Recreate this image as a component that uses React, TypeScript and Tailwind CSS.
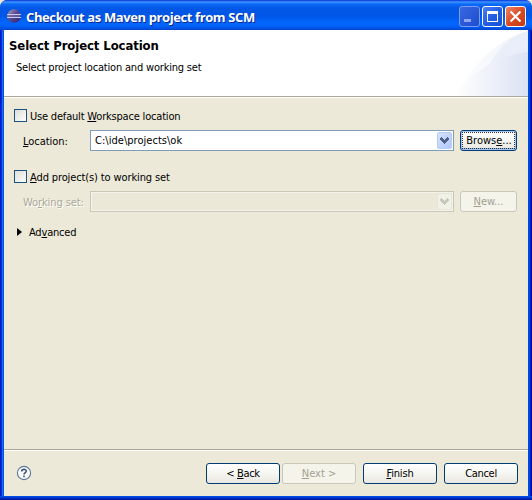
import type { ReactNode } from "react";

const BODY = "font-['DejaVu_Sans_Condensed','DejaVu_Sans',sans-serif] [font-stretch:condensed]";

function Key({ children }: { children: ReactNode }) {
  return <span className="underline decoration-1 underline-offset-[1px]">{children}</span>;
}

function Check() {
  return <span className="h-[13px] w-[13px] shrink-0 border border-[#1c5180] bg-linear-135 from-[#dcdcd7] to-white" />;
}

function Chevron({ disabled = false }: { disabled?: boolean }) {
  return (
    <span
      className={`m-px flex w-[15px] shrink-0 items-center justify-center rounded-[2px] border ${
        disabled ? "border-[#e6e5da] bg-[#f2f1e8]" : "border-[#b8cbf6] bg-linear-to-br from-[#d5e1ff] to-[#b1c8f7]"
      }`}
    >
      <svg width="9" height="7" viewBox="0 0 9 7" shapeRendering="crispEdges">
        <path
          d="M0 1h1V0h1v1h1v1h1v1h1V2h1V1h1V0h1v1h1v2H8v1H7v1H6v1H5v1H4V6H3V5H2V4H1V3H0Z"
          fill={disabled ? "#c9c7ba" : "#4d6185"}
        />
      </svg>
    </span>
  );
}

function Combo({ value = "", disabled = false }: { value?: string; disabled?: boolean }) {
  return (
    <div
      className={`flex h-[21px] w-[364px] shrink-0 border ${
        disabled ? "border-[#c9c7ba] bg-[#ebe8d8] shadow-[inset_0_0_0_1px_#f5f4ea]" : "border-[#7f9db9] bg-white"
      }`}
    >
      <span className="flex-1 pt-px pl-[4px] leading-[18px] tracking-[0.03px]">{value}</span>
      <Chevron disabled={disabled} />
    </div>
  );
}

function Button({ children, className, disabled = false }: { children: ReactNode; className: string; disabled?: boolean }) {
  return (
    <div
      className={`flex h-[21px] shrink-0 items-center justify-center rounded-[3px] border whitespace-nowrap ${
        disabled
          ? "border-[#c9c7ba] bg-[#f5f4ea] text-[#a1a192]"
          : "border-[#003c74] bg-linear-to-b from-white via-[#f5f5f1] to-[#e9e7e0]"
      } ${className}`}
    >
      {children}
    </div>
  );
}

function TitleBar() {
  return (
    <div className="flex h-[30px] items-start rounded-t-[7px] bg-[linear-gradient(to_bottom,#0831d9_0px,#3d95ff_2px,#0c6bf7_4px,#0458e6_8px,#0055e5_15px,#0264fb_22px,#0265ff_25px,#005bf0_27px,#0144cf_30px)] pt-[6px] pr-[6px] pl-[7px]">
      <svg width="14" height="14" viewBox="0 0 14 14" className="mt-[3px] shrink-0">
        <defs>
          <linearGradient id="orb" x1="0" y1="0" x2="1" y2="1">
            <stop offset="0" stopColor="#b4a2bd" />
            <stop offset=".45" stopColor="#5a4a90" />
            <stop offset="1" stopColor="#2c2070" />
          </linearGradient>
        </defs>
        <circle cx="7" cy="7" r="6.7" fill="url(#orb)" />
        <path d="M0 5.5h14M0 8.5h14" stroke="#c8cdf0" />
        <path d="M1 7h12" stroke="#7375b8" />
      </svg>
      <span className="mt-px ml-[5px] flex-1 font-['Open_Sans',sans-serif] text-[13px] leading-5 font-bold tracking-[-0.39px] [font-stretch:normal] whitespace-nowrap text-white [text-shadow:1px_1px_#0a2a90]">
        Checkout as Maven project from SCM
      </span>
      <div className="flex gap-[2px]">
        <span className="h-[21px] w-[21px] rounded-[3px] border border-[#7b9df0] bg-linear-135 from-[#3a67e0] to-[#1c4bd0] pt-[12px] pl-1">
          <span className="block h-[3px] w-[7px] bg-[#8da6ee]" />
        </span>
        <span className="h-[21px] w-[21px] rounded-[3px] border border-white bg-linear-135 from-[#4b80f5] via-[#245ee2] to-[#1450d8] p-1">
          <span className="block h-[11px] w-[11px] border border-t-[3px] border-white" />
        </span>
        <span className="flex h-[21px] w-[21px] items-center justify-center rounded-[3px] border border-white bg-linear-135 from-[#e98666] via-[#dc4a24] to-[#c43a10]">
          <svg width="11" height="11" viewBox="0 0 11 11">
            <path d="M.5.5l10 10M10.5.5l-10 10" stroke="white" strokeWidth="2.2" />
          </svg>
        </span>
      </div>
    </div>
  );
}

function Header() {
  return (
    <div className="flex h-[68px] border-b border-white bg-white">
      <div className="flex flex-1 justify-between border-b border-[#aca899]">
        <div className="pt-[7px] pl-[5px] whitespace-nowrap">
          <div className="text-[13px] leading-[18px] font-bold tracking-[-0.1px]">Select Project Location</div>
          <div className="mt-[5px] pl-[7px] leading-4 tracking-[-0.19px]">Select project location and working set</div>
        </div>
        <svg width="76" height="66" viewBox="0 0 76 66">
          <defs>
            <linearGradient id="swoop">
              <stop offset="0" stopColor="#ffffff" />
              <stop offset="1" stopColor="#eef1fa" />
            </linearGradient>
            <linearGradient id="swoopFront">
              <stop offset="0" stopColor="#ffffff" />
              <stop offset=".35" stopColor="#f3f5fb" />
              <stop offset="1" stopColor="#dce2f5" />
            </linearGradient>
          </defs>
          <path d="M2 66C18 38 46 8 76 1v65Z" fill="url(#swoop)" />
          <path d="M36 38Q50 9 76 1v36Z" fill="#e6ebf8" opacity=".7" />
          <path d="M2 66C20 42 45 25 76 22v44Z" fill="url(#swoopFront)" />
        </svg>
      </div>
    </div>
  );
}

export default function App() {
  return (
    <div className={`h-[500px] w-[532px] overflow-hidden bg-[#ece9d8] text-[11px] text-black ${BODY}`}>
      <div className="flex h-full flex-col overflow-hidden rounded-t-[7px] bg-[#0831d9]">
        <TitleBar />
        <div className="flex flex-1 bg-[linear-gradient(to_right,#0019cf_0_1px,#0831d9_1px_2px,#166aee_2px_3px,#0855dd_3px_528px,#0046e8_528px_530px,#001dc0_530px_531px,#00138c_531px)]">
          <div className="mx-1 flex flex-1 flex-col bg-[#ece9d8]">
            <Header />
            <div className="flex-1 pt-[10px] pl-[10px]">
              <div className="flex h-[15px] items-center gap-[3px] tracking-[-0.19px]">
                <Check />
                <span className="pt-[3px]">Use default <Key>W</Key>orkspace location</span>
              </div>
              <div className="mt-[7px] flex items-center">
                <span className="w-[76px] pt-[3px] pl-[9px] tracking-[-0.05px]"><Key>L</Key>ocation:</span>
                <Combo value="C:\ide\projects\ok" />
                <Button className="ml-[6px] w-[57px] shadow-[inset_0_0_0_1px_#a8c4f0,inset_0_-2px_#89ade4]">
                  <span className="flex h-[17px] w-[53px] items-center justify-center border border-dotted border-[#333]">
                    <span className="pt-[2px] pl-px">Brows<Key>e</Key>...</span>
                  </span>
                </Button>
              </div>
              <div className="mt-[18px] flex h-[15px] items-center gap-[3px] tracking-[-0.12px]">
                <Check />
                <span className="pt-[3px]"><Key>A</Key>dd project(s) to working set</span>
              </div>
              <div className="mt-[7px] flex items-center">
                <span className="w-[76px] pt-[3px] pl-[9px] tracking-[-0.1px] whitespace-nowrap text-[#aca899] [text-shadow:1px_1px_white]">Wo<Key>r</Key>king set:</span>
                <Combo disabled />
                <Button disabled className="ml-[6px] w-[57px]"><span className="pt-[2px]"><Key>N</Key>ew...</span></Button>
              </div>
              <div className="mt-3 flex h-4 items-center pl-[3px]">
                <svg width="5" height="8" viewBox="0 0 5 8"><path d="M0 0l5 4-5 4Z" /></svg>
                <span className="ml-[7px] pt-[2px] tracking-[-0.2px]">Ad<Key>v</Key>anced</span>
              </div>
            </div>
            <div className="flex h-[47px] border-t border-[#aca899]">
              <div className="flex w-full items-start border-t border-white pt-3 pr-[10px] pl-3">
                <svg width="16" height="16" viewBox="0 0 16 16" className="mt-[2px]">
                  <circle cx="8" cy="8" r="6.6" fill="#f8fafc" stroke="#607898" strokeWidth="1.1" />
                  <path d="M5.7 6.4C5.7 3.7 10.4 3.8 10.3 6.2C10.2 7.6 8 7.7 8 9.5M8 10.6v1.6" fill="none" stroke="#405878" strokeWidth="1.6" />
                </svg>
                <Button className="ml-auto w-[74px]"><span className="pt-[2px] tracking-[-0.35px]">&lt; <Key>B</Key>ack</span></Button>
                <Button disabled className="ml-[2px] w-[74px]"><span className="pt-[2px]"><Key>N</Key>ext &gt;</span></Button>
                <Button className="ml-[7px] w-[74px]"><span className="pt-[2px] tracking-[-0.15px]"><Key>F</Key>inish</span></Button>
                <Button className="ml-[7px] w-[74px]"><span className="pt-[2px] tracking-[-0.3px]">Cancel</span></Button>
              </div>
            </div>
          </div>
        </div>
        <div className="h-1 bg-linear-to-b from-[#0855e8] via-[#0030d0] to-[#00138c]" />
      </div>
    </div>
  );
}
